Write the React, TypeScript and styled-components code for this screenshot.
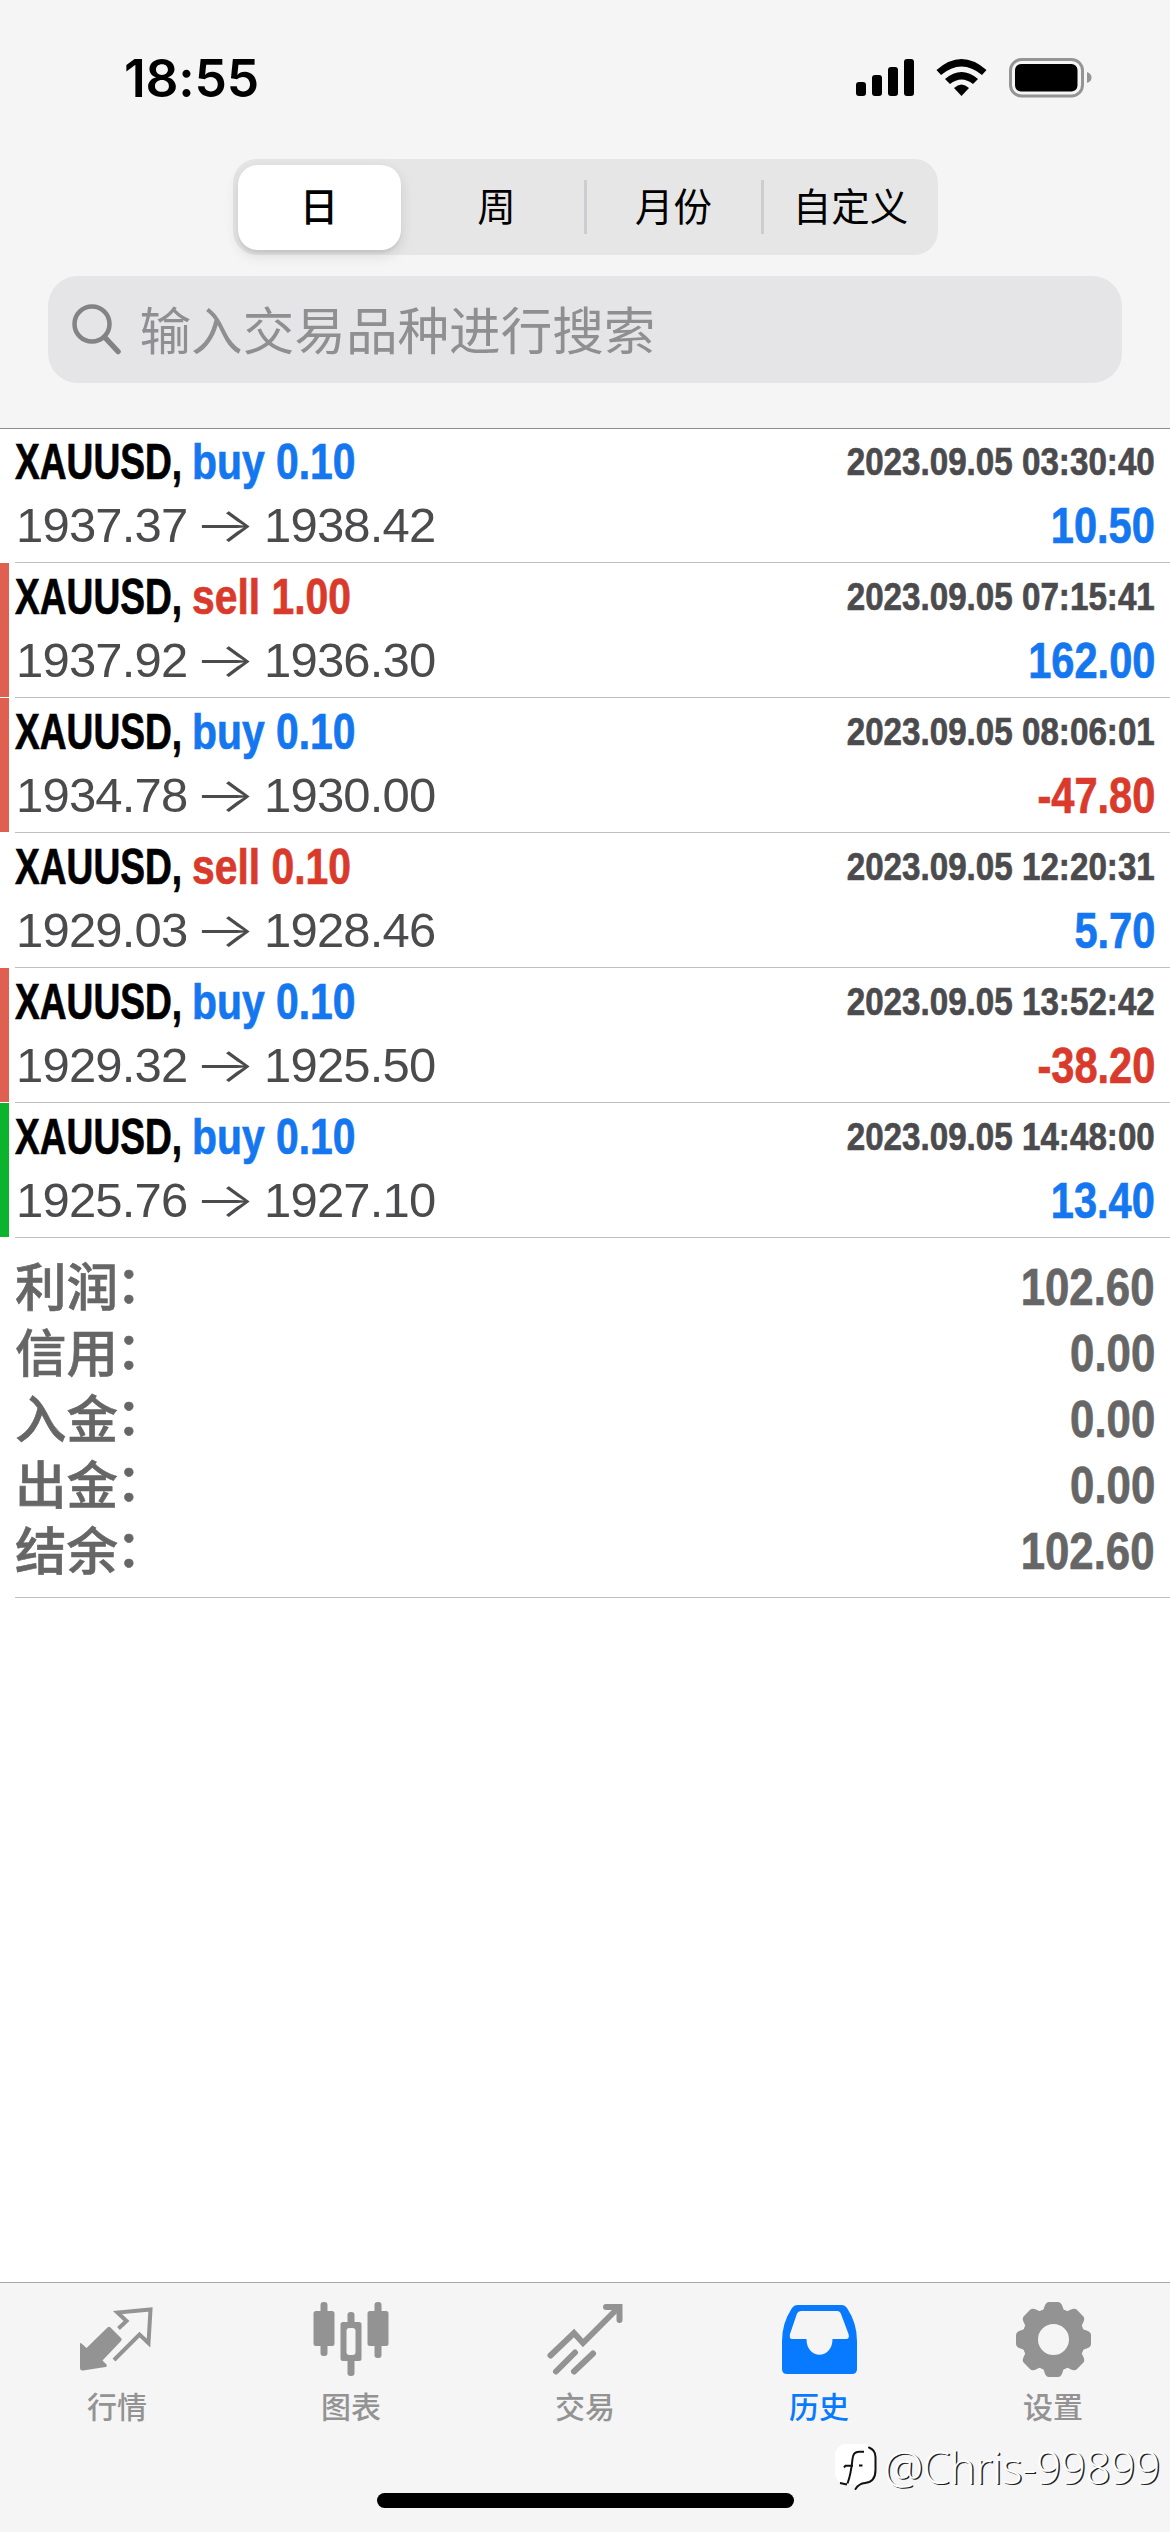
import React from "react";
import styled, { createGlobalStyle } from "styled-components";

const GRAY = "#939393";
const BLUE = "#1477f0";
const RED = "#d93a2c";
const CJK = `"Inter", "Noto Sans CJK SC", sans-serif`;
const HELV = `"Liberation Sans", "Noto Sans CJK SC", sans-serif`;

const Global = createGlobalStyle`
  * { box-sizing: border-box; }
  body { margin: 0; background: #fff; }
`;

const Screen = styled.div`
  width: 1170px;
  height: 2532px;
  display: flex;
  flex-direction: column;
  background: #fff;
  overflow: hidden;
  font-family: ${HELV};
`;

const Header = styled.header`
  height: 429px;
  flex: none;
  display: flex;
  flex-direction: column;
  align-items: center;
  background: #f5f5f5;
  border-bottom: 1px solid #8e8e90;
`;

const StatusBar = styled.div`
  width: 100%;
  height: 159px;
  padding: 48px 78px 0 124px;
  display: flex;
  justify-content: space-between;
  align-items: flex-start;
`;

const Clock = styled.div`
  font: 600 51.5px/60px "Inter", sans-serif;
  letter-spacing: -0.2px;
  color: #000;
`;

const Segments = styled.div`
  width: 705px;
  height: 96px;
  padding: 6px 0;
  display: flex;
  border-radius: 24px;
  background: #e6e6e6;
`;

const Segment = styled.div<{ $active?: boolean; $divided?: boolean }>`
  flex: 1;
  padding-left: ${(p) => (p.$active ? 0 : 3)}px;
  display: flex;
  align-items: center;
  justify-content: center;
  background: linear-gradient(#cdcdcf, #cdcdcf) left center / ${(p) => (p.$divided ? 3 : 0)}px 54px no-repeat;
  font: ${(p) => (p.$active ? 500 : 400)} 38.5px/54px ${CJK};
  color: #000;
`;

const Pill = styled.div`
  width: 163px;
  height: 85px;
  margin-right: 1px;
  display: flex;
  align-items: center;
  justify-content: center;
  border-radius: 20px;
  background: #fff;
  box-shadow: 0 5px 14px rgba(0, 0, 0, 0.12), 0 3px 2px rgba(0, 0, 0, 0.05);
`;

const Search = styled.div`
  width: 1074px;
  height: 107px;
  margin-top: 21px;
  padding-left: 24px;
  display: flex;
  align-items: center;
  gap: 17.5px;
  border-radius: 30px;
  background: #e5e5e8;
  font: 400 51.6px/76px ${CJK};
  color: #8f8f92;
`;

const Placeholder = styled.span`
  padding-top: 2px;
`;

const List = styled.main`
  flex: 1;
  display: flex;
  flex-direction: column;
`;

const Deal = styled.section<{ $bar?: string }>`
  height: 135px;
  display: flex;
  &:first-child { height: 134px; }
  &::before {
    content: "";
    width: 9px;
    margin: 0 6px 1px 0;
    flex: none;
    background: ${(p) => p.$bar || "transparent"};
  }
`;

const DealBody = styled.div`
  flex: 1;
  padding: 0 15px 3px 0;
  display: flex;
  flex-direction: column;
  justify-content: flex-end;
  border-bottom: 1px solid #c0c0c3;
`;

const Line = styled.div<{ $h: number; $inset?: number }>`
  height: ${(p) => p.$h}px;
  padding-left: ${(p) => p.$inset || 0}px;
  display: flex;
  align-items: center;
`;

const Condensed = styled.span<{ $scale: number; $w?: number; $right?: boolean; $size?: number; $color: string }>`
  width: ${(p) => (p.$w ? p.$w + "px" : "auto")};
  margin-left: ${(p) => (p.$right ? "auto" : 0)};
  flex: none;
  font-size: ${(p) => p.$size || 49.5}px;
  line-height: 60px;
  font-weight: 700;
  white-space: pre;
  color: ${(p) => p.$color};
  -webkit-text-stroke: 0.7px ${(p) => p.$color};
  transform: scaleX(${(p) => p.$scale});
  transform-origin: ${(p) => (p.$right ? "right" : "left")} center;
`;

const Timestamp = styled(Condensed)`
  margin-bottom: 2px;
`;

const Price = styled.span`
  width: 171px;
  margin-bottom: 2px;
  font-size: 49px;
  line-height: 60px;
  color: #4b4b4e;
  letter-spacing: -0.8px;
`;

const Arrow = styled.span`
  width: 77px;
  padding-left: 5px;
  margin-bottom: 2px;
  font: 300 48px/60px "Inter", sans-serif;
  color: #4b4b4e;
  transform: scaleX(1.36);
  transform-origin: left center;
`;

const Summary = styled.section`
  height: 360px;
  margin-left: 15px;
  padding: 16px 15px 0 0;
  border-bottom: 1px solid #c0c0c3;
`;

const SummaryLabel = styled.span`
  padding-top: 1px;
  font: 500 51.5px/66px ${HELV};
  color: #666;
  -webkit-text-stroke: 0.6px #666;
`;

const Colon = styled.span`
  margin-left: -2px;
  vertical-align: 3px;
  line-height: 1;
`;

const TabBar = styled.nav`
  height: 250px;
  flex: none;
  position: relative;
  display: flex;
  background: #f5f5f5;
  border-top: 1px solid #a9a9ab;
`;

const Tab = styled.div<{ $active?: boolean }>`
  flex: 1;
  padding-top: 17px;
  display: flex;
  flex-direction: column;
  align-items: center;
  gap: 5px;
  color: ${(p) => (p.$active ? "#087aff" : GRAY)};
  font: 500 30px/44px "Noto Sans CJK SC", sans-serif;
`;

const HomeIndicator = styled.div`
  position: absolute;
  left: 377px;
  top: 210px;
  width: 417px;
  height: 15px;
  border-radius: 8px;
  background: #000;
`;

const Watermark = styled.div`
  position: absolute;
  right: 9px;
  top: 155px;
  display: flex;
  align-items: center;
  gap: 4px;
  font: 300 44px/58px "Open Sans", "Noto Sans", sans-serif;
  color: #fff;
  text-shadow: 1.5px 1px 0 #222;
  white-space: nowrap;
`;

const WatermarkText = styled.span`
  width: 277px;
  letter-spacing: -0.3px;
`;

const StatusSvg = styled.svg`
  margin-top: 10px;
`;

const StatusIcons = () => (
  <StatusSvg width="236" height="40" viewBox="856 58 236 40">
    <rect x="856" y="82" width="10" height="14" rx="3" />
    <rect x="872" y="75" width="10" height="21" rx="3" />
    <rect x="888" y="67" width="10" height="29" rx="3" />
    <rect x="904" y="59" width="10" height="37" rx="3" />
    <path d="M936.5 70 Q961.500 48 986.500 70 L982 75 Q961.500 58 941 75Z" />
    <path d="M945 79 Q961.500 65 978 79 L973 84 Q961.500 75 950 84Z" />
    <path d="M954 88 Q961.500 81 969 88 L961.500 96Z" />
    <rect x="1010.500" y="59.500" width="72" height="36.500" rx="11" fill="none" stroke="#949494" strokeWidth="3" />
    <rect x="1015" y="64" width="62.500" height="27.500" rx="6" />
    <path d="M1087 72 Q1091.500 73.500 1091.500 77.500 T1087 83Z" fill="#949494" />
  </StatusSvg>
);

const SearchIcon = () => (
  <svg width="50" height="52" viewBox="0 0 50 52" fill="none" stroke="#838386" strokeWidth="4.5" strokeLinecap="round">
    <circle cx="20" cy="20" r="17.500" />
    <path d="M32.500 33 L46 47.500" strokeWidth="5.500" />
  </svg>
);

const icons: Record<string, React.ReactNode> = {
  quotes: (
    <>
      <path d="M1 44 Q1 42.500 2.500 43.500 L7.500 48 L28.500 27.500 Q30 26 31.500 27.500 L42 38 Q43.500 39.500 42 41 L23.500 60.500 L27.500 64.500 Q28.500 66.500 26.500 67 L4 70.500 Q1 71 1 68Z" fill="currentColor" />
      <path d="M39.500 28.500 L47.500 21 L38.500 12.500 L71.500 9.500 L69.500 43 L60.500 34.500 L35 60" fill="none" stroke="currentColor" strokeWidth="4" />
    </>
  ),
  chart: (
    <g fill="currentColor">
      <rect x="7.500" y="2" width="7" height="54" rx="3" />
      <rect x="0.500" y="11" width="21" height="35" rx="2.500" />
      <rect x="61.500" y="2" width="7" height="56" rx="3" />
      <rect x="54.500" y="11" width="21" height="35" rx="2.500" />
      <rect x="34.500" y="12" width="7" height="64" rx="3" />
      <rect x="27.500" y="22" width="21" height="39" rx="2.500" />
      <rect x="33.500" y="28" width="9" height="27" rx="3" fill="#f5f5f5" />
    </g>
  ),
  trade: (
    <g fill="none" stroke="currentColor" strokeWidth="6" strokeLinecap="round">
      <path d="M3.500 55.500 L27 33 L36 43 L71 8" strokeLinejoin="miter" />
      <path d="M59 7 H72.500 V20" />
      <path d="M9 71.500 L28 52.500 M27 71.500 L46 53.500" />
    </g>
  ),
  history: (
    <path
      fill="currentColor"
      fillRule="evenodd"
      d="M16 5 H61 Q64 5 66 8 Q76 23 76 41 V69 Q76 74 71 74 H6 Q1 74 1 69 V41 Q1 23 11 8 Q13 5 16 5Z M20 11 Q17 11 16 13.500 L9 34 Q8 39 11 39 H25.500 C25.500 60 51.500 60 51.500 39 H65 Q69 39 67.500 34 L60 14 Q59 11 56 11Z"
    />
  ),
  settings: (
    <>
      <circle cx="38.500" cy="39.500" r="23.500" fill="none" stroke="currentColor" strokeWidth="16" />
      {[0, 45, 90, 135, 180, 225, 270, 315].map((a) => (
        <path
          key={a}
          transform={`rotate(${a} 38.500 39.500)`}
          fill="currentColor"
          d="M26 13 Q28.500 11 29.500 6.500 Q31 2 34 2 H43 Q46 2 47.500 6.500 Q48.500 11 51 13Z"
        />
      ))}
    </>
  ),
};

const TabIcon = ({ name }: { name: string }) => (
  <svg width="77" height="78" viewBox="0 0 77 78">{icons[name]}</svg>
);

const WatermarkLogo = () => (
  <svg width="45" height="50" viewBox="0 0 45 50" overflow="visible">
    <rect x="0" y="2" width="39.500" height="40" rx="11" fill="#fff" />
    <path d="M34 5.500 Q40.500 8 40.500 15 V28 Q40.500 40 30 41 Q24 41.500 20.500 47" fill="none" stroke="#111" strokeWidth="2" strokeLinecap="round" />
    <path d="M29 9.700 H24 Q18 9.700 17.500 17 Q16 32 12.500 41.500 M9 25.500 L10.500 23.700 H18 M24 23.500 H27.500 M5 41 L12 42.500" fill="none" stroke="#111" strokeWidth="2" />
  </svg>
);

const deals = [
  { side: "buy", lots: "0.10", open: "1937.37", close: "1938.42", time: "2023.09.05 03:30:40", profit: "10.50" },
  { side: "sell", lots: "1.00", open: "1937.92", close: "1936.30", time: "2023.09.05 07:15:41", profit: "162.00", bar: "#df5f50" },
  { side: "buy", lots: "0.10", open: "1934.78", close: "1930.00", time: "2023.09.05 08:06:01", profit: "-47.80", bar: "#df5f50" },
  { side: "sell", lots: "0.10", open: "1929.03", close: "1928.46", time: "2023.09.05 12:20:31", profit: "5.70" },
  { side: "buy", lots: "0.10", open: "1929.32", close: "1925.50", time: "2023.09.05 13:52:42", profit: "-38.20", bar: "#df5f50" },
  { side: "buy", lots: "0.10", open: "1925.76", close: "1927.10", time: "2023.09.05 14:48:00", profit: "13.40", bar: "#0cb42e" },
];

const totals = [
  ["利润", "102.60"],
  ["信用", "0.00"],
  ["入金", "0.00"],
  ["出金", "0.00"],
  ["结余", "102.60"],
];

const tabs = [
  ["quotes", "行情"],
  ["chart", "图表"],
  ["trade", "交易"],
  ["history", "历史"],
  ["settings", "设置"],
];

export default function App() {
  return (
    <Screen>
      <Global />
      <Header>
        <StatusBar>
          <Clock>18:55</Clock>
          <StatusIcons />
        </StatusBar>
        <Segments>
          <Segment $active><Pill>日</Pill></Segment>
          <Segment>周</Segment>
          <Segment $divided>月份</Segment>
          <Segment $divided>自定义</Segment>
        </Segments>
        <Search>
          <SearchIcon />
          <Placeholder>输入交易品种进行搜索</Placeholder>
        </Search>
      </Header>
      <List>
        {deals.map((d) => (
          <Deal key={d.time} $bar={d.bar}>
            <DealBody>
              <Line $h={63}>
                <Condensed $scale={0.75} $w={177} $color="#000">XAUUSD,</Condensed>
                <Condensed $scale={0.825} $color={d.side === "buy" ? BLUE : RED}>{`${d.side} ${d.lots}`}</Condensed>
                <Timestamp $scale={0.84} $size={39.5} $right $color="#4b4b4e">{d.time}</Timestamp>
              </Line>
              <Line $h={66} $inset={1}>
                <Price>{d.open}</Price>
                <Arrow>→</Arrow>
                <Price>{d.close}</Price>
                <Condensed $scale={0.84} $right $color={d.profit.startsWith("-") ? RED : BLUE}>{d.profit}</Condensed>
              </Line>
            </DealBody>
          </Deal>
        ))}
        <Summary>
          {totals.map(([label, value]) => (
            <Line $h={66} key={label}>
              <SummaryLabel>{label}<Colon>：</Colon></SummaryLabel>
              <Condensed $scale={0.85} $size={51.5} $right $color="#666">{value}</Condensed>
            </Line>
          ))}
        </Summary>
      </List>
      <TabBar>
        {tabs.map(([icon, label]) => (
          <Tab key={icon} $active={icon === "history"}>
            <TabIcon name={icon} />
            {label}
          </Tab>
        ))}
        <HomeIndicator />
        <Watermark>
          <WatermarkLogo />
          <WatermarkText>@Chris-99899</WatermarkText>
        </Watermark>
      </TabBar>
    </Screen>
  );
}
